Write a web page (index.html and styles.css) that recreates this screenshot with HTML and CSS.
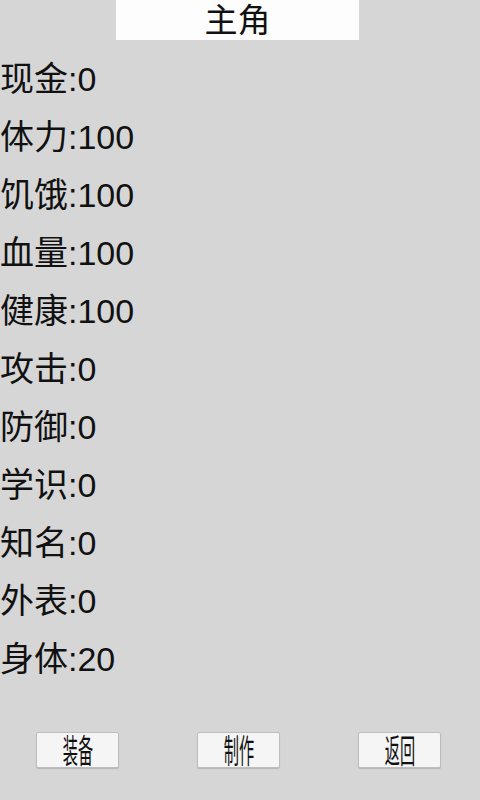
FILE: index.html
```html
<!DOCTYPE html>
<html lang="zh">
<head>
<meta charset="utf-8">
<link rel="stylesheet" href="styles.css">
</head>
<body>
<div class="screen">
  <div class="title-wrap"><div class="title">主角</div></div>
  <div class="stats">
    <div class="row">现金:0</div>
    <div class="row">体力:100</div>
    <div class="row">饥饿:100</div>
    <div class="row">血量:100</div>
    <div class="row">健康:100</div>
    <div class="row">攻击:0</div>
    <div class="row">防御:0</div>
    <div class="row">学识:0</div>
    <div class="row">知名:0</div>
    <div class="row">外表:0</div>
    <div class="row">身体:20</div>
  </div>
  <div class="buttons">
    <div class="btn"><span>装备</span></div>
    <div class="btn"><span>制作</span></div>
    <div class="btn"><span>返回</span></div>
  </div>
</div>
</body>
</html>
```
FILE: styles.css
```css
html, body {
  margin: 0;
  padding: 0;
  background: #d6d6d6;
}
.screen {
  width: 480px;
  height: 800px;
  overflow: hidden;
  background: #d6d6d6;
  font-family: "Liberation Sans", "Noto Sans CJK SC", sans-serif;
  color: #111;
}
.title-wrap {
  display: flex;
  padding-left: 116px;
}
.title {
  width: 243px;
  height: 40px;
  background: #fdfdfd;
  font-size: 33px;
  line-height: 42px;
  text-align: center;
}
.stats {
  padding-top: 10px;
}
.row {
  height: 58px;
  line-height: 58px;
  font-size: 34px;
  white-space: nowrap;
}
.buttons {
  display: flex;
  gap: 78px;
  padding-left: 36px;
  margin-top: 44px;
}
.btn {
  width: 83px;
  height: 36px;
  box-sizing: border-box;
  background: #f5f5f5;
  border: 1px solid #bdbdbd;
  border-radius: 2px;
  box-shadow: 0 1px 1px rgba(0,0,0,0.15);
  display: flex;
  justify-content: center;
  align-items: center;
}
.btn span {
  display: inline-block;
  font-size: 33px;
  line-height: 32px;
  transform: scaleX(0.46);
  color: #111;
  margin-top: 3px;
  white-space: nowrap;
}
```
